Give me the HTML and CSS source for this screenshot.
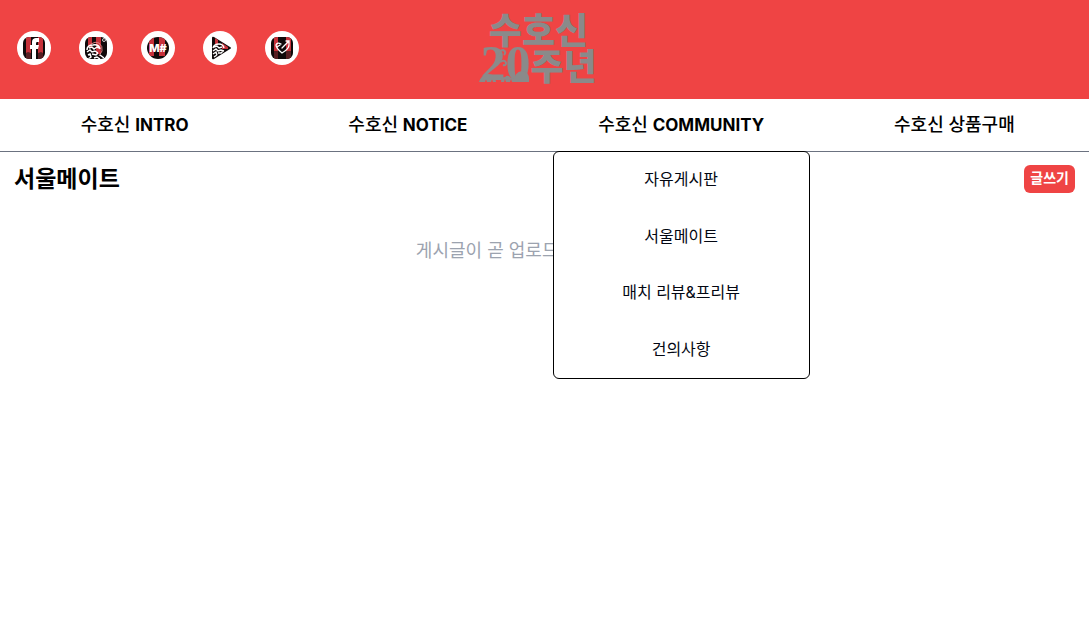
FILE: index.html
```html
<!DOCTYPE html>
<html lang="ko">
<head>
<meta charset="utf-8">
<meta name="viewport" content="width=device-width, initial-scale=1">
<title>수호신 - 서울메이트</title>
<link rel="stylesheet" href="styles.css">
</head>
<body>
<header class="header">
  <div class="socials">
    <a class="social" href="#" aria-label="Facebook">
      <svg viewBox="0 0 34 34">
        <defs><clipPath id="tile"><rect x="6" y="6" width="22" height="22" rx="6"/></clipPath></defs>
        <g clip-path="url(#tile)">
          <path fill="#100a0b" d="M6 6h23v23H6z"/>
          <path fill="#c6313a" d="M9 6h5v16H9zM21 6h5v16h-5z"/>
          <path fill="#571e22" d="M9 22l2-1 3 1v7H9zM21 22l3-1 2 1v7h-5z"/>
          <path fill="#fff" d="M15 29V18h-2v-4h2v-3c0-3 2-4 4-4h3v4h-2c-1 0-1 1-1 3h3l-1 4h-2v11z"/>
        </g>
      </svg>
    </a>
    <a class="social" href="#" aria-label="Instagram">
      <svg viewBox="0 0 34 34">
        <g clip-path="url(#tile)">
          <path fill="#100a0b" d="M6 6h23v23H6z"/>
          <path fill="#c6313a" d="M9 6h4v10H9zM17 6h5v17h-5z"/>
          <circle cx="25" cy="9" r="1.5" fill="none" stroke="#fff" stroke-width=".8"/>
          <path fill="none" stroke="#d98080" d="M12 13q4-3 8-1 4 3 3 8l-3 5"/>
          <path fill="none" stroke="#fff" stroke-width="1.5" d="M8 19q0-5 6-5 6-1 7 4M10 17l3-1 2 2 3-2 2 1M8 21l3-2 2 2 3-1 3 2M9 24l2-1 1 3-3 2M13 23l4 1 2-2M15 27l3-1 3 2M21 24l4 3"/>
        </g>
      </svg>
    </a>
    <a class="social" href="#" aria-label="M#">
      <svg viewBox="0 0 34 34">
        <defs><clipPath id="disc"><circle cx="17" cy="17" r="11"/></clipPath></defs>
        <g clip-path="url(#disc)">
          <path fill="#100a0b" d="M6 6h23v23H6z"/>
          <path fill="#c6313a" d="M8 6h5v19H8zM18 6h6v19h-6z"/>
        </g>
        <text class="social-text" x="17" y="21" text-anchor="middle">M#</text>
      </svg>
    </a>
    <a class="social" href="#" aria-label="YouTube">
      <svg viewBox="0 0 34 34">
        <path fill="#100a0b" d="M9 7q0-2 2-1l16 10q2 1 0 2L11 28q-2 1-2-1z"/>
        <path fill="#c6313a" d="M12 7l3 2v4h-3zM19 12l6 4v2h-6z"/>
        <path fill="none" stroke="#fff" stroke-width="1.4" d="M10 17q1-4 6-4 4 0 5 4M11 16l3-1 2 2 3-1M10 20l3-2 2 2 3-1 3 1M10 23l3-2 1 3M15 22l3 0 2-2M11 26l3-2"/>
      </svg>
    </a>
    <a class="social" href="#" aria-label="후원">
      <svg viewBox="0 0 34 34">
        <g clip-path="url(#tile)">
          <path fill="#100a0b" d="M6 6h23v23H6z"/>
          <path fill="#c6313a" d="M9 6h4v14H9zM21 6h5v14h-5z"/>
          <path fill="#571e22" d="M9 20h4v8H9zM21 20h5v8h-5z"/>
          <path fill="none" stroke="#fff" stroke-width="1.3" stroke-linecap="round" d="M16 13q-4-2-5 1 0 3 6 8 7-4 7-8M12 16l3-2M17 17l7-7M21 10h3v3"/>
        </g>
      </svg>
    </a>
  </div>
  <a class="logo" href="#" aria-label="수호신 20주년">
    <span class="logo-top">수호신</span>
    <span class="logo-bottom"><span class="logo-number">20</span>주년</span>
    <svg class="logo-ornament" viewBox="0 0 122 74" aria-hidden="true">
      <path fill="#8a8a8a" d="M1 71q2-7 9-8 7 0 8 8h-3l-1-3-1 3H9l-1-3-1 3zM23 71q0-5 4-5 3-3 6 1 4 0 4 4h-3l-1-3-1 3h-4l-1-3-1 3zM36 71q0-10 8-11 8 0 7 11z"/>
      <path fill="none" stroke="#8a8a8a" stroke-width="2" d="M22 45q-1-6 3-6 4 2 1 5M22 51q5-3 6 1 0 3-3 2"/>
    </svg>
  </a>
</header>
<nav class="nav">
  <ul class="nav-list">
    <li class="nav-item"><a class="nav-link" href="#">수호신 <b>INTRO</b></a></li>
    <li class="nav-item"><a class="nav-link" href="#">수호신 <b>NOTICE</b></a></li>
    <li class="nav-item">
      <a class="nav-link" href="#">수호신 <b>COMMUNITY</b></a>
      <ul class="menu">
        <li><a class="menu-link" href="#">자유게시판</a></li>
        <li><a class="menu-link" href="#">서울메이트</a></li>
        <li><a class="menu-link" href="#">매치 리뷰&amp;프리뷰</a></li>
        <li><a class="menu-link" href="#">건의사항</a></li>
      </ul>
    </li>
    <li class="nav-item"><a class="nav-link" href="#">수호신 상품구매</a></li>
  </ul>
</nav>
<main class="board">
  <div class="board-head">
    <h1 class="board-title">서울메이트</h1>
    <button class="write" type="button">글쓰기</button>
  </div>
  <p class="empty">게시글이 곧 업로드 될 예정입니다.</p>
</main>
</body>
</html>
```
FILE: styles.css
```css
* { box-sizing: border-box; }

body {
  margin: 0;
  min-height: 100vh;
  background: #fff;
  color: #000;
  font-family: Inter, "Noto Sans CJK KR", sans-serif;
  font-size: 16px;
  line-height: 24px;
}

a { color: inherit; text-decoration: none; }
ul { list-style: none; margin: 0; padding: 0; }

.header {
  display: grid;
  grid-template-columns: 1fr auto 1fr;
  align-items: center;
  padding: 11px 17px 14px;
  background: #ef4444;
}

.socials { display: flex; gap: 28px; }

.social {
  width: 34px;
  height: 34px;
  border-radius: 50%;
  background: #fff;
}

.social svg { display: block; }
.social-text { font: 800 11px Inter, sans-serif; fill: #fff; }

.logo {
  position: relative;
  display: block;
  width: 122px;
  height: 74px;
  margin-right: 12px;
  color: #8a8a8a;
  font-family: "Noto Sans CJK KR", sans-serif;
  font-size: 36px;
  font-weight: 900;
  line-height: 35px;
}

.logo-top, .logo-bottom {
  display: flex;
  align-items: baseline;
  justify-content: center;
  white-space: nowrap;
}

.logo-number { font-family: "Liberation Serif", serif; font-size: 50px; }
.logo-ornament { position: absolute; inset: 0; }

.nav { border-bottom: 1px solid #6b7280; }

.nav-list {
  display: grid;
  grid-template-columns: repeat(4, 1fr);
  gap: 16px;
  padding: 0 6px;
}

.nav-item { position: relative; text-align: center; }

.nav-link {
  display: block;
  padding: 12px 0;
  font-size: 18px;
  font-weight: 500;
  line-height: 28px;
}

.nav-link b { font-size: 17px; font-weight: 700; }

.menu {
  position: absolute;
  z-index: 1;
  top: 100%;
  left: 0;
  right: 0;
  display: grid;
  grid-auto-rows: 1fr;
  min-height: 228px;
  border: 1px solid #000;
  border-radius: 6px;
  background: #fff;
}

.menu-link { display: block; padding: 15px 16px 17px; color: #030712; }

.board { padding: 13px 14px; }

.board-head {
  display: flex;
  align-items: center;
  justify-content: space-between;
}

.board-title { margin: 0; font-size: 23px; font-weight: 700; line-height: 28px; }

.write {
  padding: 0 6px 2px;
  border: 0;
  border-radius: 6px;
  background: #ef4444;
  color: #fff;
  font: 700 14px/26px Inter, "Noto Sans CJK KR", sans-serif;
}

.empty {
  margin: 44px 0 0;
  color: #9ca3af;
  font-size: 18px;
  line-height: 28px;
  text-align: center;
}
```
